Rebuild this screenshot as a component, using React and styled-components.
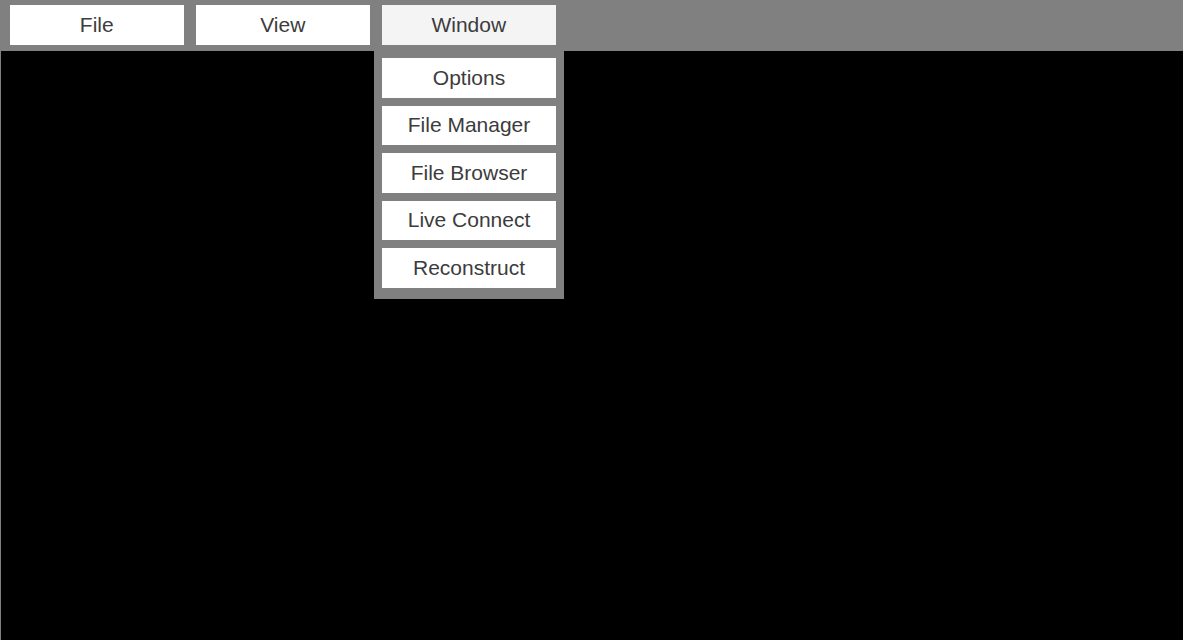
import React, { useState } from 'react';
import styled, { createGlobalStyle } from 'styled-components';

const GlobalStyle = createGlobalStyle`
  html, body {
    margin: 0;
    padding: 0;
    background: #000;
  }
  * {
    box-sizing: border-box;
  }
`;

const Screen = styled.div`
  display: flex;
  flex-direction: column;
  width: 100%;
  height: 640px;
  background: #000;
  font-family: "Liberation Sans", Arial, sans-serif;
`;

const MenuBar = styled.div`
  display: flex;
  gap: 12.5px;
  height: 51px;
  padding: 5px 10px 6px;
  background: #808080;
`;

const MenuSlot = styled.div`
  position: relative;
  width: 173.5px;
`;

const MenuButton = styled.div`
  display: flex;
  align-items: center;
  justify-content: center;
  height: 40px;
  background: ${props => props.active ? '#f4f4f4' : '#fff'};
  color: #3c3c3c;
  font-size: 21px;
  cursor: pointer;
`;

const Viewport = styled.div`
  flex: 1;
  border-left: 1px solid #808080;
  background: #000;
`;

const Dropdown = styled.div`
  position: absolute;
  top: 46px;
  left: -8px;
  width: 190px;
  display: flex;
  flex-direction: column;
  gap: 8px;
  padding: 7px 8px 11px;
  background: #808080;
  z-index: 2;
`;

const DropdownItem = styled.div`
  display: flex;
  align-items: center;
  justify-content: center;
  height: 39.5px;
  background: #fff;
  color: #3c3c3c;
  font-size: 21px;
  cursor: pointer;
`;

const menus = [
  { name: 'File', items: [] },
  { name: 'View', items: [] },
  { name: 'Window', items: ['Options', 'File Manager', 'File Browser', 'Live Connect', 'Reconstruct'] },
];

export default function App() {
  const [open, setOpen] = useState('Window');

  return (
    <Screen>
      <GlobalStyle />
      <MenuBar>
        {menus.map(menu => (
          <MenuSlot key={menu.name}>
            <MenuButton
              active={open === menu.name}
              onClick={() => setOpen(open === menu.name ? null : menu.name)}
            >
              {menu.name}
            </MenuButton>
            {open === menu.name && menu.items.length > 0 && (
              <Dropdown>
                {menu.items.map(item => (
                  <DropdownItem key={item}>{item}</DropdownItem>
                ))}
              </Dropdown>
            )}
          </MenuSlot>
        ))}
      </MenuBar>
      <Viewport />
    </Screen>
  );
}
